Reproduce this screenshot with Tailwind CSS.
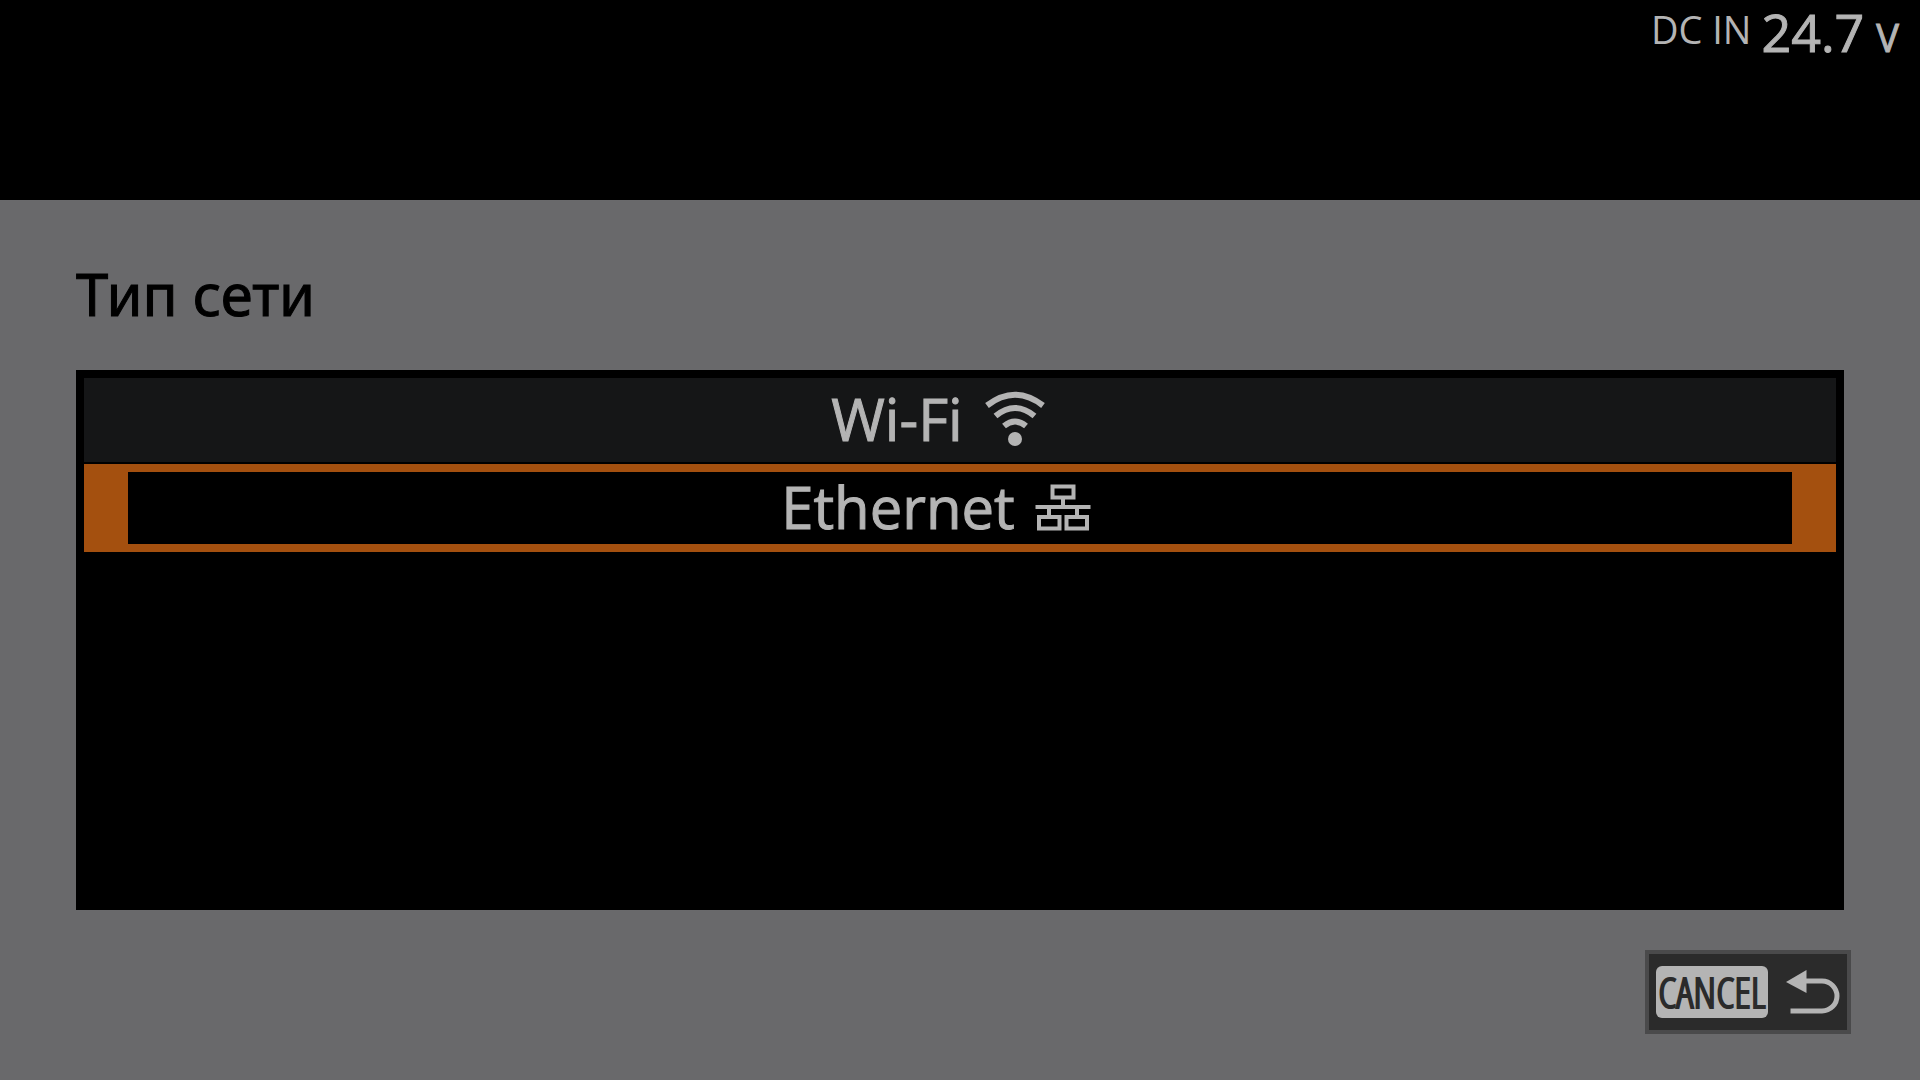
<!DOCTYPE html>
<html lang="ru">
<head>
    <meta charset="UTF-8">
    <meta name="viewport" content="width=device-width, initial-scale=1.0">
    <title>Тип сети</title>
    <script src="https://cdn.jsdelivr.net/npm/@tailwindcss/browser@4"></script>
</head>
<body class="min-h-screen flex flex-col bg-[#69696b] font-['Open_Sans',sans-serif] text-[#b4b4b4]">
    <header class="h-[200px] bg-black flex justify-end items-start pr-[21px]">
        <p class="flex items-start">
            <span class="text-[38px] leading-[58px] pr-2.5">DC IN</span>
            <span class="flex items-baseline gap-3 [-webkit-text-stroke:1px_#b4b4b4]">
                <span class="text-[52px] leading-[64px]">24.7</span>
                <span class="text-[38px] leading-[56px]">V</span>
            </span>
        </p>
    </header>

    <main class="grow flex flex-col px-[76px] pt-14">
        <h1 class="text-[58px] leading-[76px] text-black font-['Noto_Sans',sans-serif] [-webkit-text-stroke:1px_#000000]">Тип сети</h1>

        <!-- Network list -->
        <div class="mt-[38px] h-[540px] bg-black p-2 flex flex-col gap-[2px]">
            <button type="button" class="h-[84px] w-full bg-[#151617] flex items-center justify-center gap-[22px] pr-11 pb-0.5">
                <span class="text-[58px] leading-[72px] [-webkit-text-stroke:1px_#b4b4b4]">Wi-Fi</span>
                <svg class="w-[60px] h-[56px]" viewBox="0 0 60 56" fill="none" stroke="#b4b4b4" stroke-width="6" aria-hidden="true">
                    <path d="M2 14.500Q30 -7 58 14.500" />
                    <path d="M10.500 25Q30 9 49.500 25" />
                    <path d="M19 35Q30 26 41 35" />
                    <circle cx="30" cy="48" r="7" fill="#b4b4b4" stroke="none" />
                </svg>
            </button>
            <button type="button" aria-current="true" class="h-[88px] w-full bg-black border-y-8 border-x-[44px] border-[#a4500f] flex items-center justify-center gap-5 pr-12 pb-0.5">
                <span class="text-[58px] leading-[72px] [-webkit-text-stroke:1px_#b4b4b4]">Ethernet</span>
                <svg class="w-14 h-12" viewBox="0 0 56 48" fill="none" stroke="#b4b4b4" stroke-width="4" aria-hidden="true">
                    <path d="M17.500 3.500h21v11h-21zM28 15v8M0.500 24h55M14 24v9M42 24v9M4 34h20.500v11.500H4zM31.500 34H52v11.500H31.500z" />
                </svg>
            </button>
        </div>
    </main>

    <footer class="flex justify-end px-[69px] pb-[46px]">
        <button type="button" class="h-[84px] bg-[#2b2b2b] border-4 border-[#4a4a4b] flex items-center gap-[18px] px-[7px]">
            <span class="w-28 h-[52px] rounded-md bg-[#b4b4b4] text-[#2b2b2b] flex items-center justify-center text-[43px] leading-[52px] font-['Open_Sans_Condensed_Light','Roboto_Condensed',sans-serif] [-webkit-text-stroke:2px_#2b2b2b]">CANCEL</span>
            <svg class="w-[54px] h-11" viewBox="0 0 54 44" aria-hidden="true">
                <path d="M0 12L20.500 0v23z" fill="#b4b4b4" />
                <path d="M18 11H36A15 15 0 0 1 36 41H4.500" fill="none" stroke="#b4b4b4" stroke-width="5" />
            </svg>
        </button>
    </footer>
</body>
</html>
